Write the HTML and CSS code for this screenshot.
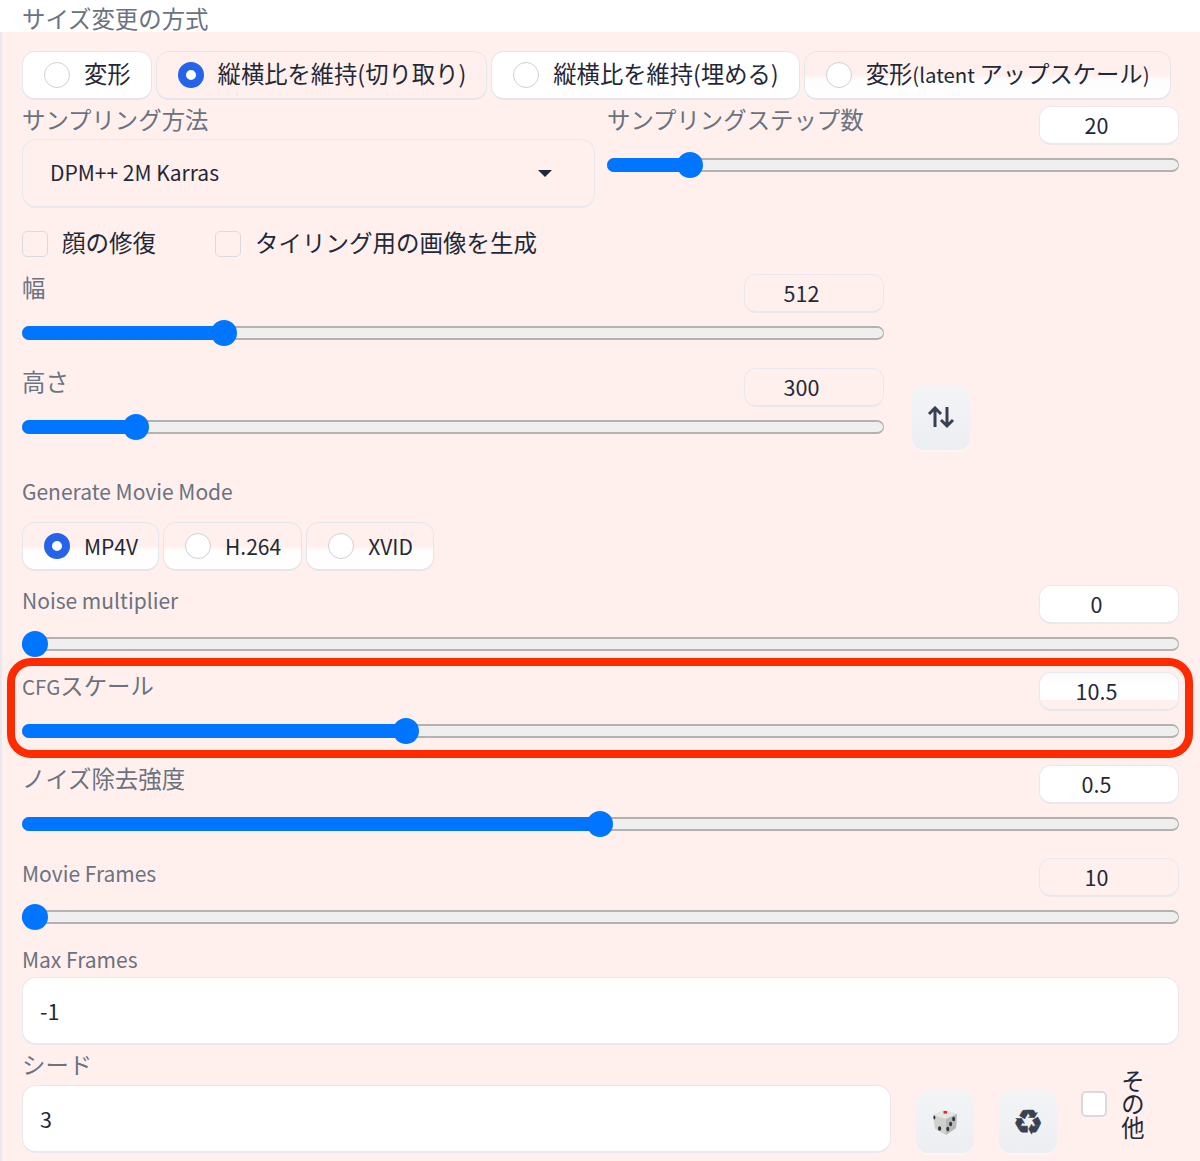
FILE: index.html
```html
<!DOCTYPE html>
<html lang="ja">
<head>
<meta charset="utf-8">
<title>img2img</title>
<link rel="stylesheet" href="styles.css">
</head>
<body>
<header class="top"><span class="label">サイズ変更の方式</span></header>
<main class="panel">
  <div class="radios">
    <label class="radio"><i class="dot"></i><span class="t">変形</span></label>
    <label class="radio radio--tint"><i class="dot dot--on"></i><span class="t">縦横比を維持(切り取り)</span></label>
    <label class="radio"><i class="dot"></i><span class="t">縦横比を維持(埋める)</span></label>
    <label class="radio radio--half"><i class="dot"></i><span class="t">変形<span class="en">(latent </span>アップスケール<span class="en">)</span></span></label>
  </div>

  <div class="sampler">
    <div>
      <div class="label">サンプリング方法</div>
      <div class="select"><span class="t en">DPM++ 2M Karras</span><i class="caret"></i></div>
    </div>
    <div class="slider">
      <div class="slider-head"><span class="label">サンプリングステップ数</span><span class="num">20</span></div>
      <div class="track"><div class="fill" style="width:14.5%"></div></div>
    </div>
  </div>

  <div class="checks">
    <label class="check"><i class="box"></i><span class="t">顔の修復</span></label>
    <label class="check"><i class="box"></i><span class="t">タイリング用の画像を生成</span></label>
  </div>

  <div class="size">
    <div class="size-sliders">
      <div class="slider">
        <div class="slider-head"><span class="label">幅</span><span class="num num--tint">512</span></div>
        <div class="track"><div class="fill" style="width:23.5%"></div></div>
      </div>
      <div class="slider">
        <div class="slider-head"><span class="label">高さ</span><span class="num num--tint">300</span></div>
        <div class="track"><div class="fill" style="width:13.2%"></div></div>
      </div>
    </div>
    <button class="tool tool--swap" aria-label="swap">
      <svg viewBox="0 1 28 24" width="28" height="24"><path d="M8 22V3M2 9l6-6 6 6M20 2v19M14 15l6 6 6-6" fill="none" stroke="#374151" stroke-width="3"/></svg>
    </button>
  </div>

  <div class="label label--mode en">Generate Movie Mode</div>
  <div class="radios radios--movie">
    <label class="radio radio--half"><i class="dot dot--on"></i><span class="t en">MP4V</span></label>
    <label class="radio radio--half"><i class="dot"></i><span class="t en">H.264</span></label>
    <label class="radio radio--half"><i class="dot"></i><span class="t en">XVID</span></label>
  </div>

  <div class="slider slider--noise">
    <div class="slider-head"><span class="label en">Noise multiplier</span><span class="num">0</span></div>
    <div class="track"><div class="fill" style="width:1.1%"></div></div>
  </div>
  <div class="slider slider--cfg">
    <div class="slider-head"><span class="label"><span class="en">CFG</span>スケール</span><span class="num num--half">10.5</span></div>
    <div class="track"><div class="fill" style="width:33.25%"></div></div>
  </div>
  <div class="slider slider--wide">
    <div class="slider-head"><span class="label">ノイズ除去強度</span><span class="num">0.5</span></div>
    <div class="track"><div class="fill" style="width:50%"></div></div>
  </div>
  <div class="slider slider--wide">
    <div class="slider-head"><span class="label en">Movie Frames</span><span class="num num--tint">10</span></div>
    <div class="track"><div class="fill" style="width:1.1%"></div></div>
  </div>

  <div class="label label--max en">Max Frames</div>
  <div class="field">-1</div>

  <div class="seed">
    <div class="seed-main">
      <div class="label label--seed">シード</div>
      <div class="field">3</div>
    </div>
    <button class="tool tool--dice" aria-label="random">
      <svg viewBox="0 0 28 28" width="28" height="28">
        <path d="M14 2 26 6 25 20 15 27 4 21 2 7Z" fill="#d0d0ce"/>
        <path d="M14 2 26 6 15 11 2 7Z" fill="#e6e6e4"/>
        <path d="M15 11 26 6 25 20 15 27Z" fill="#b8b8b6"/>
        <rect x="12.5" y="3" width="3.6" height="2.6" fill="#f0271c"/>
        <g fill="#2f3640">
          <ellipse cx="3.4" cy="9.5" rx="1" ry="2"/><ellipse cx="8.6" cy="20.5" rx="1.6" ry="2.3"/>
          <ellipse cx="22.6" cy="11" rx="1.5" ry="2.2"/><ellipse cx="19.6" cy="16" rx="1.5" ry="2.2"/><ellipse cx="16.8" cy="21" rx="1.5" ry="2.2"/>
        </g>
      </svg>
    </button>
    <button class="tool tool--reuse" aria-label="reuse">♻</button>
    <label class="other"><i class="box box--white"></i><span class="other-text">その他</span></label>
  </div>
</main>
<div class="highlight"></div>
</body>
</html>
```

FILE: styles.css
```css
* { box-sizing: border-box; }
html, body { margin: 0; background: #fff; }
body {
  position: relative;
  font-family: "Noto Sans CJK JP", "Noto Sans", sans-serif;
  color: #1f2937;
  font-size: 23.3px;
  overflow: hidden;
  height: 1161px;
}
i { display: block; font-style: normal; }

.label { display: block; color: #6b7280; font-size: 23.4px; line-height: 27px; padding-bottom: 6px; }
.t { margin-top: -4px; }
.en { font-size: 21px; }
.t .en { font-size: 20.4px; }
.label .en { font-size: 20.5px; }
.label.en { font-size: 21px; line-height: 30px; padding-bottom: 3px; }

.top { height: 32px; padding: 4px 0 0 22px; }
.top .label { line-height: 28px; padding-bottom: 0; }

.panel {
  background: #fff0ed;
  border-left: 2px solid #e9e8ee;
  padding: 19px 21px 8px 20px;
  height: 1129px;
}

/* radios */
.radios { display: flex; gap: 4px; }
.radio {
  display: flex;
  align-items: center;
  gap: 14px;
  height: 49px;
  padding: 0 20px 0 21px;
  background: #fff;
  border: 1px solid #e5e6ec;
  border-bottom-width: 2px;
  border-radius: 13px;
  white-space: nowrap;
}
.radio--tint { background: #fff0ed; }
.radio--half { background: linear-gradient(#fff0ed 0, #fff0ed 50%, #fdfdfe 60%, #fff 100%); }
.dot {
  width: 26px; height: 26px;
  border-radius: 50%;
  background: #fff;
  border: 1px solid #cfd1d6;
}
.dot--on { background: #fff; border: 8px solid #2563eb; }

/* sampler row */
.sampler {
  display: grid;
  grid-template-columns: 573px 572px;
  column-gap: 12px;
  margin-top: 6px;
}
.select {
  display: flex;
  justify-content: space-between;
  align-items: center;
  height: 69px;
  padding: 0 42px 0 27px;
  border: 1px solid #e8e8ee;
  border-bottom-width: 2px;
  border-radius: 14px;
}
.select .t { margin-top: -2px; }
.caret {
  width: 0; height: 0;
  border-left: 7px solid transparent;
  border-right: 7px solid transparent;
  border-top: 7px solid #1f2937;
}

/* sliders */
.slider-head { display: flex; justify-content: space-between; align-items: flex-start; }
.num {
  width: 140px;
  height: 39px;
  line-height: 36px;
  text-align: center;
  padding-right: 25px;
  font-size: 21.5px;
  background: #fff;
  border: 1px solid #e8e8ee;
  border-bottom-width: 2px;
  border-radius: 12px;
}
.num--tint { background: #fff0ed; }
.num--half { background: linear-gradient(#fafafb 0, #fff 40%, #fff 74%, #fff0ed 75%); }
.track {
  position: relative;
  height: 14px;
  margin-top: 13px;
  background: #efefef;
  border: 1px solid #b2b2b2;
  border-width: 2px 1px;
  border-radius: 7px;
}
.fill {
  position: absolute;
  left: -1px; top: -2px; bottom: -2px;
  background: #0075ff;
  border-radius: 7px 0 0 7px;
}
.fill::after {
  content: "";
  position: absolute;
  right: -13px; top: -6px;
  width: 26px; height: 26px;
  border-radius: 50%;
  background: #0075ff;
}

/* checkboxes */
.checks { display: flex; gap: 59px; margin-top: 23px; height: 26px; font-size: 23.5px; }
.check { display: flex; align-items: center; gap: 14px; white-space: nowrap; }
.box {
  width: 26px; height: 26px;
  border: 1px solid #d8dae0;
  border-radius: 5px;
}
.box--white { background: #fff; border-width: 2px; }

/* size group */
.size { display: flex; align-items: flex-end; gap: 28px; margin-top: 17px; }
.size-sliders { width: 862px; display: flex; flex-direction: column; gap: 28px; padding-bottom: 16px; }

.tool {
  display: flex;
  align-items: center;
  justify-content: center;
  padding: 0;
  width: 58px;
  background: linear-gradient(#f3f4f6, #eceef2);
  border: 0;
  border-radius: 12px;
  box-shadow: 0 2px 0 #fbf6f5;
  color: #374151;
}
.tool--swap { height: 65px; }

.label--mode { margin-top: 26px; }
.radios--movie { margin-top: 13px; }
.radios--movie .t { margin-top: 0; }

.slider--noise { margin-top: 14px; }
.slider--cfg { margin-top: 21px; }
.slider--wide { margin-top: 27px; }

.label--max { margin-top: 20px; }
.field {
  height: 68px;
  line-height: 65px;
  padding-left: 17px;
  background: #fff;
  border: 1px solid #e8e8ee;
  border-bottom-width: 2px;
  border-radius: 14px;
  font-size: 21.5px;
}

/* seed row */
.seed { display: flex; align-items: flex-end; margin-top: 4px; }
.seed-main { width: 869px; }
.label--seed { height: 36px; padding-top: 2px; }
.tool--dice { height: 63px; margin-left: 25px; }
.tool--reuse {
  height: 63px;
  margin-left: 25px;
  font-family: "DejaVu Sans", sans-serif;
  font-size: 34px;
  line-height: 1;
  -webkit-text-stroke: 0.7px #374151;
}
.other { display: flex; align-items: center; gap: 14px; margin-left: 24px; padding-bottom: 14px; }
.other-text { width: 24px; line-height: 23.5px; text-align: center; margin-top: -1px; }

/* red annotation drawn over the screenshot */
.highlight {
  position: absolute;
  left: 7px; top: 658px;
  width: 1186px; height: 100px;
  border: 8px solid #ff2a00;
  border-radius: 24px;
  pointer-events: none;
}
```
